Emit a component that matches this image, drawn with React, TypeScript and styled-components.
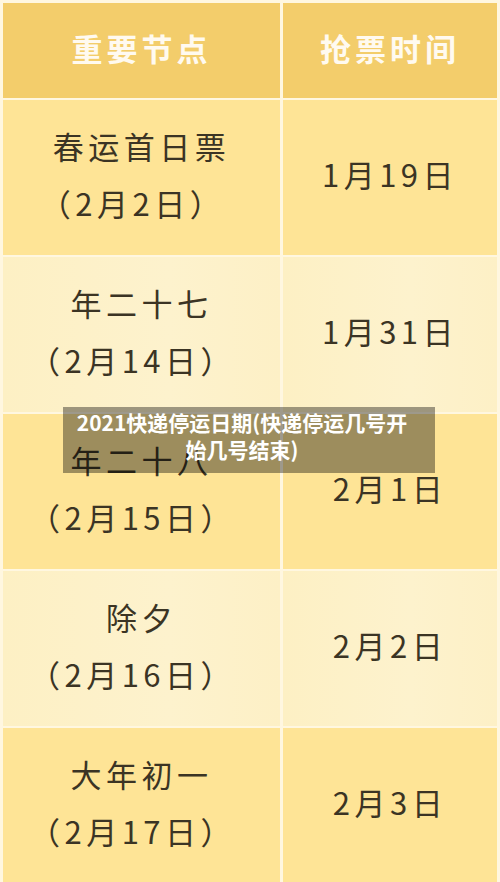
import React from "react";
import styled, { createGlobalStyle } from "styled-components";

const Global = createGlobalStyle`
  html, body {
    margin: 0;
    padding: 0;
    background: #fff7e0;
  }
  body {
    font-family: "Noto Sans CJK SC", "Noto Sans", sans-serif;
    overflow: hidden;
  }
`;

const Page = styled.div`
  position: relative;
  width: 500px;
  height: 882px;
  overflow: hidden;
  background: #fff7e0;
`;

const Table = styled.div`
  display: grid;
  grid-template-columns: 277px 214px;
  grid-template-rows: 95px repeat(5, 155px);
  column-gap: 3px;
  row-gap: 2px;
  padding: 3px 3px 0 3px;
`;

const HeaderCell = styled.div`
  display: flex;
  align-items: center;
  justify-content: center;
  box-sizing: border-box;
  padding-bottom: 6px;
  background: #f3cd6b;
  color: #fffaf0;
  font-size: 31px;
  font-weight: 700;
  letter-spacing: 4px;
`;

const Cell = styled.div<{ $light: boolean }>`
  display: flex;
  flex-direction: column;
  align-items: center;
  justify-content: center;
  box-sizing: border-box;
  padding-bottom: 8px;
  background: ${(p) =>
    p.$light
      ? "linear-gradient(90deg, #fdf0c4 0%, #fdf2cd 60%, #fdf0c6 100%)"
      : "#fee496"};
  color: #3b3424;
  font-size: 31px;
  font-weight: 400;
  letter-spacing: 4.5px;
`;

const Line = styled.div<{ $sub?: boolean }>`
  line-height: 57px;
  white-space: nowrap;
  padding-right: ${(p) => (p.$sub ? "18px" : "0")};
`;

const Caption = styled.div`
  position: absolute;
  left: 63px;
  top: 407px;
  width: 372px;
  height: 66px;
  box-sizing: border-box;
  padding: 2px 14px 0 0;
  background: rgba(0, 0, 0, 0.38);
  color: #ffffff;
  font-size: 21px;
  font-weight: 700;
  line-height: 27px;
  text-align: center;
`;

const CaptionLine = styled.span`
  display: block;
  white-space: nowrap;
`;

type Row = { name: string; date: string; ticket: string };

const rows: Row[] = [
  { name: "春运首日票", date: "（2月2日）", ticket: "1月19日" },
  { name: "年二十七", date: "（2月14日）", ticket: "1月31日" },
  { name: "年二十八", date: "（2月15日）", ticket: "2月1日" },
  { name: "除夕", date: "（2月16日）", ticket: "2月2日" },
  { name: "大年初一", date: "（2月17日）", ticket: "2月3日" },
];

export default function App() {
  return (
    <Page>
      <Global />
      <Table>
        <HeaderCell>重要节点</HeaderCell>
        <HeaderCell>抢票时间</HeaderCell>
        {rows.map((r, i) => (
          <React.Fragment key={r.name}>
            <Cell $light={i % 2 === 1}>
              <Line>{r.name}</Line>
              <Line $sub>{r.date}</Line>
            </Cell>
            <Cell $light={i % 2 === 1}>
              <Line>{r.ticket}</Line>
            </Cell>
          </React.Fragment>
        ))}
      </Table>
      <Caption>
        <CaptionLine>2021快递停运日期(快递停运几号开</CaptionLine>
        <CaptionLine>始几号结束)</CaptionLine>
      </Caption>
    </Page>
  );
}
